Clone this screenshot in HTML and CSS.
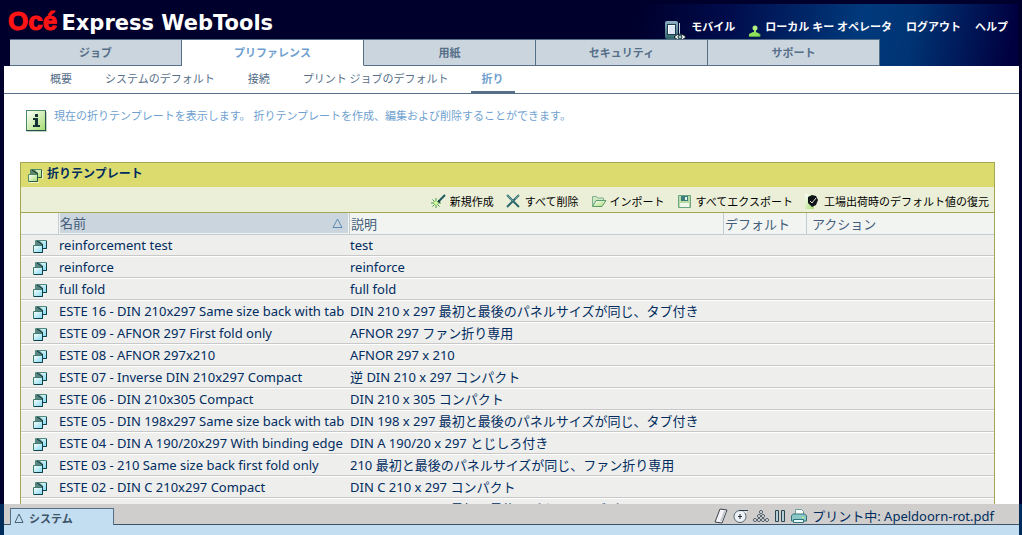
FILE: index.html
```
<!DOCTYPE html>
<html lang="ja">
<head>
    <meta charset="UTF-8">
    <title>Océ Express WebTools</title>
    <link rel="stylesheet" href="styles.css">
</head>
<body>
    <svg class="defs" aria-hidden="true">
        <defs>
            <linearGradient id="blueFill" x1="0" y1="0" x2="1" y2="1">
                <stop offset="0" stop-color="#ffffff"/>
                <stop offset="1" stop-color="#7fd8ee"/>
            </linearGradient>
            <linearGradient id="greenFill" x1="0" y1="0" x2="1" y2="1">
                <stop offset="0" stop-color="#ffffff"/>
                <stop offset="1" stop-color="#a4dc6c"/>
            </linearGradient>
            <linearGradient id="steelFill" x1="0" y1="0" x2="0" y2="1">
                <stop offset="0" stop-color="#8fb0c4"/>
                <stop offset="1" stop-color="#2f6468"/>
            </linearGradient>
            <symbol id="fold" viewBox="0 0 15 14">
                <path d="M2.500.5h11v8h-11z" fill="url(#blueFill)" stroke="#4f8a7c"/>
                <path d="M3 1h4l3 3v1H3z" fill="#5d8585"/>
                <path d="M4 1l6 4" stroke="#0c3838"/>
                <path d="M13.500 1v7.500H10" fill="none" stroke="#0f3f48"/>
                <path d="M.5 5.500h9v7h-9z" fill="url(#blueFill)" stroke="#3f7c6c"/>
                <path d="M9.500 5v7.500H1" fill="none" stroke="#0f3f48"/>
            </symbol>
        </defs>
    </svg>

    <header class="header">
        <div class="topbar">
            <h1 class="brand"><span class="brand_oce">Océ</span> Express WebTools</h1>
            <div class="user_links">
                <a href="#" class="with_icon">
                    <svg class="icon_mobile" width="22" height="21" viewBox="0 0 22 21">
                        <rect x="0" y="0" width="13" height="18" rx="2" fill="url(#steelFill)"/>
                        <path d="M14.500 2v11" stroke="#c8dce4"/>
                        <rect x="2.500" y="3.500" width="8" height="10" fill="#dde6f4" stroke="#1c3c54"/>
                        <path d="M3 4.500h7M3.500 4v9" stroke="#fff"/>
                        <path d="M9 16q6-6 12 0q-6 6-12 0z" fill="#fff" stroke="#10202c"/>
                        <circle cx="15" cy="16" r="2" fill="#9cc" stroke="#10202c"/>
                    </svg>
                    モバイル</a>
                <a href="#" class="with_icon user">
                    <svg width="12" height="12" viewBox="0 0 12 12">
                        <path d="M0 11V9l4-2h3l4 2v2z" fill="#8fe05c"/>
                        <path d="M5 5h2v3H5z" fill="#8fe05c"/>
                        <circle cx="6" cy="3" r="2.500" fill="#b4f080"/>
                        <path d="M0 11.500h11V9" fill="none" stroke="#4f9e44"/>
                    </svg>
                    ローカル キー オペレータ</a>
                <a href="#">ログアウト</a>
                <a href="#">ヘルプ</a>
            </div>
        </div>
        <nav class="tabs">
            <a href="#" class="tab">ジョブ</a>
            <a href="#" class="tab active">プリファレンス</a>
            <a href="#" class="tab">用紙</a>
            <a href="#" class="tab">セキュリティ</a>
            <a href="#" class="tab">サポート</a>
        </nav>
    </header>

    <nav class="subnav">
        <a href="#">概要</a>
        <a href="#">システムのデフォルト</a>
        <a href="#">接続</a>
        <a href="#">プリント ジョブのデフォルト</a>
        <a href="#" class="active">折り</a>
    </nav>

    <main class="content">
        <div class="info">
            <svg width="21" height="22" viewBox="0 0 21 22">
                <rect x="1" y="2" width="20" height="20" fill="#c4d4c4"/>
                <rect x=".5" y=".5" width="19" height="20" fill="url(#greenFill)" stroke="#4c8a68"/>
                <path d="M0 20.500h20M19.500 1v20" stroke="#1f4f50"/>
                <path d="M9 4h3v3H9zM7 8h5v7h2v2H7v-2h2v-5H7z" fill="#143038"/>
            </svg>
            <p>現在の折りテンプレートを表示します。 折りテンプレートを作成、編集および削除することができます。</p>
        </div>

        <section class="panel">
            <h2 class="panel_title">
                <svg width="15" height="14" viewBox="0 0 15 14">
                    <path d="M1 13.500h10M14.500 2v8" stroke="#f4f4d0"/>
                    <path d="M2.500.5h11v8h-11z" fill="url(#greenFill)" stroke="#4f8a68"/>
                    <path d="M3 1h4l3 3v1H3z" fill="#5d8568"/>
                    <path d="M4 1l6 4" stroke="#0c3828"/>
                    <path d="M13.500 1v7.500H10" fill="none" stroke="#2c5c48"/>
                    <path d="M.5 5.500h9v7h-9z" fill="url(#greenFill)" stroke="#4f8a68"/>
                    <path d="M9.500 5v7.500H1" fill="none" stroke="#2c5c48"/>
                </svg>
                折りテンプレート
            </h2>
            <div class="toolbar">
                <button type="button">
                    <svg width="16" height="16" viewBox="0 0 16 16">
                        <path d="M8 8l6-6" stroke="#1d5560" stroke-width="2"/>
                        <path d="M5 5v10M0 10h10M1.500 6.500l7 7M8.500 6.500l-7 7" stroke="#3f9a3c"/>
                        <circle cx="5" cy="10" r="2" fill="#d4f89c"/>
                        <path d="M7 8l2 1" stroke="#123c40" stroke-width="2"/>
                    </svg>
                    新規作成</button>
                <button type="button">
                    <svg width="16" height="16" viewBox="0 0 16 16">
                        <path d="M1 2l12 12M13 2L1 14" stroke="#2d6a70" stroke-width="2"/>
                        <path d="M1 2l6 6M13 2L9 6" stroke="#6fa49c"/>
                    </svg>
                    すべて削除</button>
                <button type="button">
                    <svg width="16" height="16" viewBox="0 0 16 16">
                        <path d="M1.500 13V3.500h4l1 1.500h6v3" fill="#cfe8c0" stroke="#7fae90"/>
                        <path d="M1.500 13.500L5 7.500h10l-4 6z" fill="url(#greenFill)" stroke="#5d9c70"/>
                    </svg>
                    インポート</button>
                <button type="button">
                    <svg width="16" height="16" viewBox="0 0 16 16">
                        <path d="M1.500 2.500h12v12h-12z" fill="#b8dca4" stroke="#6ca488"/>
                        <path d="M4 3h7v5H4z" fill="#3c7c7c"/>
                        <path d="M8 4h2v3H8z" fill="#e8f8e8"/>
                        <path d="M3 10h9v4H3z" fill="#eef8ea"/>
                    </svg>
                    すべてエクスポート</button>
                <button type="button">
                    <svg width="16" height="16" viewBox="0 0 16 16">
                        <path d="M0 1h7l2 3v12H0z" fill="url(#greenFill)"/>
                        <path d="M3 4l4-2 4 1 2 4-2 5-4 2-4-4z" fill="#101418"/>
                        <path d="M5 8l2 2 4-5" fill="none" stroke="#dde4e4"/>
                    </svg>
                    工場出荷時のデフォルト値の復元</button>
            </div>
            <table class="templates">
                <thead>
                    <tr>
                        <th class="col_icon"></th>
                        <th class="col_name sorted">
                            <div>名前
                                <svg width="11" height="10" viewBox="0 0 11 10">
                                    <path d="M5.500 1L10 9.500H1z" fill="none" stroke="#5c8cb4"/>
                                </svg>
                            </div>
                        </th>
                        <th class="col_desc">説明</th>
                        <th class="col_default">デフォルト</th>
                        <th class="col_action">アクション</th>
                    </tr>
                </thead>
                <tbody>
                    <tr><td><svg><use href="#fold"/></svg></td><td>reinforcement test</td><td>test</td><td></td><td></td></tr>
                    <tr><td><svg><use href="#fold"/></svg></td><td>reinforce</td><td>reinforce</td><td></td><td></td></tr>
                    <tr><td><svg><use href="#fold"/></svg></td><td>full fold</td><td>full fold</td><td></td><td></td></tr>
                    <tr><td><svg><use href="#fold"/></svg></td><td>ESTE 16 - DIN 210x297 Same size back with tab</td><td>DIN 210 x 297 最初と最後のパネルサイズが同じ、タブ付き</td><td></td><td></td></tr>
                    <tr><td><svg><use href="#fold"/></svg></td><td>ESTE 09 - AFNOR 297 First fold only</td><td>AFNOR 297 ファン折り専用</td><td></td><td></td></tr>
                    <tr><td><svg><use href="#fold"/></svg></td><td>ESTE 08 - AFNOR 297x210</td><td>AFNOR 297 x 210</td><td></td><td></td></tr>
                    <tr><td><svg><use href="#fold"/></svg></td><td>ESTE 07 - Inverse DIN 210x297 Compact</td><td>逆 DIN 210 x 297 コンパクト</td><td></td><td></td></tr>
                    <tr><td><svg><use href="#fold"/></svg></td><td>ESTE 06 - DIN 210x305 Compact</td><td>DIN 210 x 305 コンパクト</td><td></td><td></td></tr>
                    <tr><td><svg><use href="#fold"/></svg></td><td>ESTE 05 - DIN 198x297 Same size back with tab</td><td>DIN 198 x 297 最初と最後のパネルサイズが同じ、タブ付き</td><td></td><td></td></tr>
                    <tr><td><svg><use href="#fold"/></svg></td><td>ESTE 04 - DIN A 190/20x297 With binding edge</td><td>DIN A 190/20 x 297 とじしろ付き</td><td></td><td></td></tr>
                    <tr><td><svg><use href="#fold"/></svg></td><td>ESTE 03 - 210 Same size back first fold only</td><td>210 最初と最後のパネルサイズが同じ、ファン折り専用</td><td></td><td></td></tr>
                    <tr><td><svg><use href="#fold"/></svg></td><td>ESTE 02 - DIN C 210x297 Compact</td><td>DIN C 210 x 297 コンパクト</td><td></td><td></td></tr>
                    <tr><td><svg><use href="#fold"/></svg></td><td>ESTE 01 - DIN B 210x297 Same size back</td><td>DIN B 210 x 297 最初と最後のパネルサイズが同じ</td><td></td><td></td></tr>
                </tbody>
            </table>
        </section>
    </main>

    <footer class="footer">
        <div class="statusbar">
            <button type="button" class="system_tab">
                <svg width="10" height="10" viewBox="0 0 10 10">
                    <path d="M5 1L9 9.500H1z" fill="none" stroke="#4a5f74"/>
                </svg>
                システム</button>
            <div class="status">
                <svg width="14" height="16" viewBox="0 0 14 16">
                    <path d="M6 1l7 1-5 13-7-1z" fill="#f4f4f8" stroke="#3c464e"/>
                    <path d="M11 3L7 13" stroke="#c4c8cc" stroke-width="2"/>
                </svg>
                <svg width="15" height="14" viewBox="0 0 15 14">
                    <circle cx="7" cy="7.500" r="6" fill="#eef2f6" stroke="#56646e"/>
                    <path d="M6 1.500h9" stroke="#2c3c48"/>
                    <path d="M7 2.500h7v1H9z" fill="#fff"/>
                    <path d="M5 7.500h4M7 5v5" stroke="#222c34"/>
                </svg>
                <svg width="16" height="14" viewBox="0 0 16 14" fill="#fff" stroke="#46545e">
                    <circle cx="8" cy="3" r="1.500"/>
                    <circle cx="6" cy="7" r="1.500"/><circle cx="10" cy="7" r="1.500"/>
                    <circle cx="2" cy="11" r="1.500"/><circle cx="6" cy="11" r="1.500"/>
                    <circle cx="10" cy="11" r="1.500"/><circle cx="14" cy="11" r="1.500"/>
                </svg>
                <svg width="12" height="14" viewBox="0 0 12 14" fill="#b4ccd4" stroke="#2c4450">
                    <path d="M1.500 1.500h3v11h-3zM7.500 1.500h3v11h-3z"/>
                </svg>
                <svg class="icon_printer" width="16" height="16" viewBox="0 0 16 16">
                    <path d="M4.500 7V1.500h6l2 2V7" fill="#fff" stroke="#6aa09c"/>
                    <path d="M.5 7.500l2-1.500h11l2 1.500V13H.5z" fill="#8cc8c8" stroke="#2f7478"/>
                    <path d="M2.500 11.500h10v3h-10z" fill="#e4f8fc" stroke="#2f7478"/>
                    <path d="M11 9.500h2" stroke="#c8ff80"/>
                </svg>
                <a href="#">プリント中: Apeldoorn-rot.pdf</a>
            </div>
        </div>
    </footer>
</body>
</html>
```
FILE: styles.css
```
* {
    box-sizing: border-box;
}
body {
    display: flex;
    flex-direction: column;
    height: 100vh;
    margin: 0;
    overflow: hidden;
    background-color: #00002c;
    color: #002c5f;
    font-family: "Noto Sans", "Noto Sans CJK JP", sans-serif;
    font-size: 13px;
}
a {
    color: inherit;
    text-decoration: none;
}
h1, h2, p {
    margin: 0;
}
svg {
    flex: none;
}
.defs {
    position: absolute;
    width: 0;
    height: 0;
}

/* header */
.header {
    margin: 4px 4px 0;
    background: linear-gradient(100deg, #00002c 62%, #000c4c 71%, #003a7c 84%, #003474 89%, #000040 99%);
}
.topbar {
    display: flex;
    justify-content: space-between;
    height: 35px;
    padding: 0 10px 0 4px;
}
.brand {
    color: #fff;
    font-family: "DejaVu Sans", Verdana, sans-serif;
    font-size: 21px;
    line-height: 35px;
    white-space: nowrap;
}
.brand_oce {
    margin-right: -3px;
    color: #ff1414;
    font-family: "Liberation Sans", Arial, sans-serif;
    font-size: 26px;
    -webkit-text-stroke: 1px #ff1414;
}
.user_links {
    display: flex;
    gap: 14px;
    padding-top: 14px;
    color: #fff;
    font-size: 11px;
    font-weight: bold;
    line-height: 18px;
    white-space: nowrap;
}
.with_icon {
    display: flex;
    gap: 4px;
}
.user svg {
    margin-top: 7px;
}
.icon_mobile {
    margin-top: 3px;
}
.tabs {
    display: flex;
    padding-left: 6px;
}
.tab {
    width: 172px;
    height: 27px;
    border: 1px solid #566f88;
    border-left: none;
    background-color: #cbd5de;
    color: #566f88;
    font-size: 11px;
    font-weight: bold;
    line-height: 26px;
    text-align: center;
}
.tab.active {
    width: 182px;
    border-bottom-color: #fff;
    background-color: #fff;
    color: #6f9fd0;
}

/* second level */
.subnav {
    display: flex;
    gap: 3px;
    height: 28px;
    margin: 0 3px 0 4px;
    padding-left: 31px;
    border-bottom: 1px solid #566f88;
    background-color: #fff;
    color: #566f88;
    font-size: 11px;
    line-height: 26px;
    white-space: nowrap;
}
.subnav a {
    padding: 0 15px;
}
.subnav .active {
    margin-left: 4px;
    padding: 0 11px;
    border-bottom: 2px solid #566f88;
    color: #6f9fd0;
    font-weight: bold;
}

.content {
    flex: 1;
    min-height: 0;
    margin: 0 3px 0 4px;
    padding: 0 24px 0 16px;
    overflow: hidden;
    background-color: #fff;
}
.info {
    display: flex;
    gap: 7px;
    height: 68px;
    padding: 16px 6px 0;
    color: #6f9fd0;
    font-size: 11px;
    line-height: 11px;
}

/* template list */
.panel {
    border: 1px solid #a3a652;
}
.panel_title {
    display: flex;
    gap: 4px;
    height: 24px;
    padding-left: 7px;
    background-color: #dcdc6e;
    font-size: 12px;
    line-height: 22px;
}
.panel_title svg {
    margin-top: 6px;
}
.toolbar {
    display: flex;
    justify-content: flex-end;
    gap: 12px;
    height: 26px;
    padding-right: 5px;
    border-bottom: 1px solid #a3a652;
    background-color: #ebefd7;
}
.toolbar button {
    display: flex;
    align-items: center;
    gap: 3px;
    padding: 2px 0 0;
    border: none;
    background: none;
    color: #000;
    font-family: inherit;
    font-size: 11px;
    white-space: nowrap;
    cursor: pointer;
}
.templates {
    width: 100%;
    table-layout: fixed;
    border-spacing: 0;
}
.templates th {
    height: 22px;
    padding: 0 0 0 1px;
    border-bottom: 1px solid #c3ccd3;
    border-left: 1px solid #c3ccd3;
    background-color: #f2f4f1;
    color: #435d7a;
    font-weight: normal;
    line-height: 20px;
    text-align: left;
}
.templates th.col_icon {
    width: 37px;
    border-left: none;
}
.col_name {
    width: 291px;
}
.templates th.sorted {
    padding: 0 1px 1px;
}
.sorted div {
    display: flex;
    align-items: center;
    justify-content: space-between;
    padding-right: 5px;
    background-color: #cbd5de;
}
.col_default {
    width: 83px;
}
.templates th.col_action {
    width: 188px;
    padding-left: 5px;
}
.templates td {
    height: 22px;
    padding: 0 0 0 1px;
    border-top: 1px solid #fff;
    border-bottom: 1px solid #c8c8c8;
    background-color: #eeeeec;
    line-height: 20px;
    white-space: nowrap;
}
.templates tr:first-child td {
    height: 21px;
    border-top: none;
}
.templates td:first-child {
    padding: 3px 0 0 12px;
}
.templates td svg {
    display: block;
    width: 15px;
    height: 14px;
}

/* bottom status */
.footer {
    height: 31px;
    padding: 0 3px 0 4px;
    background-color: #002c5c;
}
.statusbar {
    display: flex;
    justify-content: space-between;
    align-items: flex-end;
    height: 31px;
    padding: 0 25px 10px 6px;
    background: linear-gradient(#cfcecc 20px, #3f5468 20px, #3f5468 21px, #c3ddf1 21px);
}
.system_tab {
    display: flex;
    align-items: center;
    gap: 5px;
    width: 104px;
    height: 17px;
    padding: 2px 3px 0;
    border: 1px solid #566f88;
    border-bottom: none;
    background-color: #c3ddf1;
    color: #3d5368;
    font-family: inherit;
    font-size: 11px;
    font-weight: bold;
}
.status {
    display: flex;
    align-items: center;
    gap: 5px;
    height: 18px;
    line-height: 18px;
    white-space: nowrap;
}
```
